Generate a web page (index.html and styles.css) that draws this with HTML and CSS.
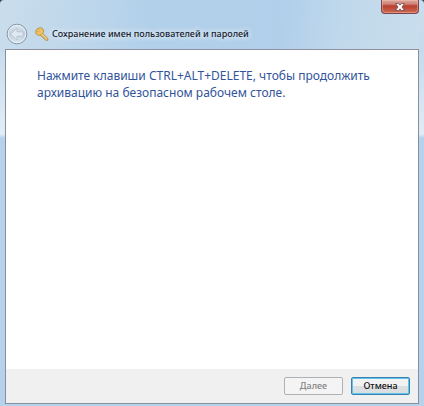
FILE: index.html
```html
<!DOCTYPE html>
<html lang="ru">
<head>
<meta charset="utf-8">
<title>Сохранение имен пользователей и паролей</title>
<link rel="stylesheet" href="styles.css">
</head>
<body>
<div class="window">
  <header class="titlebar">
    <div class="caption">
      <button class="close" type="button" aria-label="Закрыть">
        <svg width="12" height="10" viewBox="0 0 12 10"><path d="M1.500 1.500h3L6 3.200l1.500-1.700h3L8 5l2.500 3.500h-3L6 6.800 4.500 8.500h-3L4 5z" fill="#fff" stroke="#6b4a4a" stroke-width=".8"/></svg>
      </button>
    </div>
    <div class="heading">
      <button class="back" type="button" aria-label="Назад" disabled>
        <svg width="22" height="22" viewBox="0 0 22 22">
          <defs><linearGradient id="orb" x2="0" y2="1"><stop offset="0" stop-color="#dbe6ef"/><stop offset=".5" stop-color="#c0cfdd"/><stop offset="1" stop-color="#dbe8f3"/></linearGradient></defs>
          <circle cx="11" cy="11" r="9.800" fill="url(#orb)" stroke="#8393a4"/>
          <circle cx="11" cy="11" r="8.800" fill="none" stroke="#edf4fa" stroke-width=".8"/>
          <path d="M4.500 11L11 5v3.800h6v4.400h-6V17z" fill="#dfe8f0" stroke="#b0bdca" stroke-width=".7" stroke-linejoin="round"/>
        </svg>
      </button>
      <svg class="key" width="14" height="14" viewBox="0 0 14 14">
        <path d="M6.500 5.300l6.200 5.900.3 2-2.200.2-1.100-1.500-1.200-.2-.3-1.500-1.300-.3-2-2.200z" fill="#e5b95c" stroke="#a88850" stroke-width=".7"/>
        <ellipse cx="4.600" cy="4.500" rx="4.200" ry="3.600" transform="rotate(-35 4.600 4.500)" fill="#ecc15e" stroke="#b08a45" stroke-width=".7"/>
        <circle cx="3.200" cy="3.600" r="1" fill="#fff3cf" stroke="#a87b2d" stroke-width=".5"/>
        <path d="M6 6.500l5.800 5.600" stroke="#ffe09a" stroke-width=".7"/>
      </svg>
      <h1 class="title">Сохранение имен пользователей и паролей</h1>
    </div>
  </header>
  <main class="panel">
    <p class="message">Нажмите клавиши CTRL+ALT+DELETE, чтобы продолжить архивацию на безопасном рабочем столе.</p>
    <footer class="actions">
      <button class="button" type="button" disabled>Далее</button>
      <button class="button button-focus" type="button">Отмена</button>
    </footer>
  </main>
</div>
</body>
</html>
```
FILE: styles.css
```css
* { box-sizing: border-box; }
body {
  margin: 0;
  background: #3c4650;
  font-family: "Noto Sans", "Open Sans", sans-serif;
}
.window {
  display: flex;
  flex-direction: column;
  min-height: 100vh;
  padding: 0 5px 2px;
  border-radius: 4px 4px 0 0;
  background:
    linear-gradient(#c8dcec 0, #c8dcec 50px, #e3edf6 134px, transparent 138px) 0 0 / 5px 100% no-repeat,
    linear-gradient(#cadeed 0, #c5daeb 50px, #e1ecf5 134px, transparent 138px) 100% 0 / 5px 100% no-repeat,
    linear-gradient(100deg, #c9ddec 0, #c0d8eb 16%, #b2d0ea 36%, #b1cfea 66%, #c0d8eb 80%, #c9deed 100%) 0 0 / 100% 49px no-repeat,
    #b5d2ea;
}
.titlebar {
  display: flex;
  flex-direction: column;
  height: 49px;
}
.caption {
  display: flex;
  justify-content: flex-end;
  height: 14px;
}
.close {
  display: flex;
  align-items: center;
  justify-content: center;
  width: 38px;
  height: 14px;
  padding: 0;
  border: 1px solid #75464c;
  border-top: 0;
  border-radius: 0 0 4px 4px;
  background: linear-gradient(#dba79c, #cf8578 30%, #b93f30 46%, #cf6a53);
  box-shadow: inset 0 0 0 1px rgba(255, 205, 190, .4);
}
.heading {
  display: flex;
  align-items: center;
  padding: 9px 0 0 1px;
}
.back {
  width: 22px;
  height: 22px;
  padding: 0;
  border: 0;
  background: none;
}
.back svg { display: block; }
.key { margin-left: 7px; }
.title {
  margin: 0 0 0 3px;
  color: #17222e;
  font-size: 9px;
  font-weight: 500;
  line-height: 16px;
  text-shadow: 0 0 6px #fff, 0 0 6px rgba(255, 255, 255, .7);
  white-space: nowrap;
}
.panel {
  display: flex;
  flex: 1;
  flex-direction: column;
  border: 1px solid #8291a1;
  border-top-color: #908fa0;
  background: #fff;
}
.message {
  flex: 1;
  margin: 0;
  padding: 17px 31px;
  color: #31549b;
  font-size: 12px;
  line-height: 17px;
}
.actions {
  display: flex;
  justify-content: flex-end;
  gap: 8px;
  padding: 8px 8px;
  background: #f0f0f0;
}
.button {
  width: 59px;
  height: 18px;
  padding: 0;
  border: 1px solid #adb2b5;
  border-radius: 2px;
  background: #f4f4f4;
  color: #838383;
  font: 500 9px/14px "Noto Sans", "Open Sans", sans-serif;
}
.button-focus {
  border-color: #3c7fb1;
  background: linear-gradient(#f2f2f2 50%, #dcdfe1 50%);
  box-shadow: inset 0 0 0 1px #5cc5e8;
  color: #111;
}
```
